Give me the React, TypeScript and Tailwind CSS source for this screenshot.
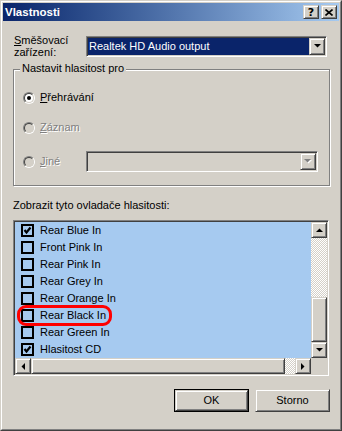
import React from "react";

const raised =
  "border border-t-[#D4D0C8] border-l-[#D4D0C8] border-r-[#404040] border-b-[#404040] shadow-[inset_1px_1px_0_#fff,inset_-1px_-1px_0_#808080] bg-[#D4D0C8]";
const sunken =
  "border border-t-[#808080] border-l-[#808080] border-r-white border-b-white shadow-[inset_1px_1px_0_#404040,inset_-1px_-1px_0_#D4D0C8] p-[1px]";
const dither =
  "bg-[conic-gradient(#fff_25%,#D4D0C8_0_50%,#fff_0_75%,#D4D0C8_0)] bg-[length:2px_2px]";

function Arrow({ dir, color = "#000" }: { dir: "up" | "down" | "left" | "right"; color?: string }) {
  const pts: Record<string, string> = {
    up: "0,4 7,4 3.5,0.5",
    down: "0,0 7,0 3.5,3.5",
    left: "4,0 4,7 0.5,3.5",
    right: "0,0 0,7 3.5,3.5",
  };
  const vertical = dir === "up" || dir === "down";
  return (
    <svg width={vertical ? 7 : 4} height={vertical ? 4 : 7} className="block">
      <polygon points={pts[dir]} fill={color} />
    </svg>
  );
}

function ScrollBtn({ dir, className = "" }: { dir: "up" | "down" | "left" | "right"; className?: string }) {
  return (
    <div className={`${raised} w-[16px] h-[16px] flex items-center justify-center shrink-0 ${className}`}>
      <Arrow dir={dir} />
    </div>
  );
}

function Radio({ checked, disabled }: { checked?: boolean; disabled?: boolean }) {
  return (
    <div className="w-[12px] h-[12px] rounded-full border border-t-[#808080] border-l-[#808080] border-r-white border-b-white shrink-0">
      <div
        className={`w-full h-full rounded-full border border-t-[#404040] border-l-[#404040] border-r-[#D4D0C8] border-b-[#D4D0C8] flex items-center justify-center ${
          disabled ? "bg-[#D4D0C8]" : "bg-white"
        }`}
      >
        {checked && <div className="w-[4px] h-[4px] rounded-full bg-black" />}
      </div>
    </div>
  );
}

function Check({ checked }: { checked: boolean }) {
  return (
    <div className="w-[13px] h-[13px] border-2 border-black shrink-0 flex items-center justify-center">
      {checked && (
        <svg width="9" height="9" className="block">
          <polyline points="1.5,4 3.5,6.5 7.5,1.5" fill="none" stroke="#000" strokeWidth="2.2" />
        </svg>
      )}
    </div>
  );
}

const items: [string, boolean][] = [
  ["Rear Blue In", true],
  ["Front Pink In", false],
  ["Rear Pink In", false],
  ["Rear Grey In", false],
  ["Rear Orange In", false],
  ["Rear Black In", false],
  ["Rear Green In", false],
  ["Hlasitost CD", true],
];

const disabledText = "text-[#808080] [text-shadow:1px_1px_0_#fff]";

export default function App() {
  return (
    <div className="w-[342px] h-[431px] border border-t-[#D4D0C8] border-l-[#D4D0C8] border-r-[#404040] border-b-[#404040] bg-[#D4D0C8] font-['Liberation_Sans',Arial,sans-serif] text-[11px] leading-[13px] text-black">
      <div className="w-full h-full border border-t-white border-l-white border-r-[#808080] border-b-[#808080] p-[1px] flex flex-col">
        {/* title bar */}
        <div className="h-[18px] flex items-center pl-[2px] pr-[2px] bg-gradient-to-r from-[#0A246A] to-[#A6CAF0] shrink-0">
          <span className="text-white font-bold text-[11.5px] flex-1">Vlastnosti</span>
          <div className={`${raised} w-[16px] h-[14px] flex items-center justify-center`}>
            <span className="font-bold text-[11px] leading-[11px] font-['DejaVu_Sans',sans-serif]">?</span>
          </div>
          <div className={`${raised} w-[16px] h-[14px] flex items-center justify-center ml-[2px]`}>
            <svg width="8" height="7" className="block">
              <path d="M0.5 0.5 L7.5 6.5 M7.5 0.5 L0.5 6.5" stroke="#000" strokeWidth="1.6" />
            </svg>
          </div>
        </div>

        {/* body */}
        <div className="flex flex-col pt-[12px] pl-[10px] pr-[9px]">
          <div className="flex items-center h-[26px]">
            <div className="w-[73px] pl-[1px] leading-[12px]">
              <div>
                <span className="underline">S</span>měšovací
              </div>
              <div>zařízení:</div>
            </div>
            <div className={`${sunken} w-[241px] h-[21px] flex bg-white`}>
              <div className="flex-1 bg-[#0A246A] text-white pl-[1px] flex items-center">Realtek HD Audio output</div>
              <div className={`${raised} w-[16px] h-[17px] flex items-center justify-center`}>
                <Arrow dir="down" />
              </div>
            </div>
          </div>

          {/* group box */}
          <div className="relative mt-[10px] h-[117px] border border-[#808080] shadow-[inset_1px_1px_0_#fff,1px_1px_0_#fff] pt-[21px] pl-[9px] pr-[11px] flex flex-col gap-[17px]">
            <span className="absolute -top-[8px] left-[6px] px-[2px] bg-[#D4D0C8]">Nastavit hlasitost pro</span>
            <div className="flex items-center gap-[5px] h-[13px]">
              <Radio checked />
              <span>
                <span className="underline">P</span>řehrávání
              </span>
            </div>
            <div className="flex items-center gap-[5px] h-[13px]">
              <Radio disabled />
              <span className={disabledText}>
                <span className="underline">Z</span>áznam
              </span>
            </div>
            <div className="flex items-center gap-[5px] h-[21px]">
              <Radio disabled />
              <span className={disabledText}>
                <span className="underline">J</span>iné
              </span>
              <div className={`${sunken} ml-auto w-[232px] h-[21px] flex bg-[#D4D0C8]`}>
                <div className="flex-1" />
                <div className={`${raised} w-[16px] h-[17px] flex items-center justify-center`}>
                  <svg width="8" height="5" className="block">
                    <polygon points="1,1 8,1 4.5,4.5" fill="#fff" />
                    <polygon points="0,0 7,0 3.5,3.5" fill="#808080" />
                  </svg>
                </div>
              </div>
            </div>
          </div>

          <div className="mt-[13px]">Zobrazit tyto ovladače hlasitosti:</div>

          {/* list box */}
          <div className={`${sunken} mt-[8px] w-[316px] h-[156px] bg-[#A6CAF0] flex flex-col`}>
            <div className="flex h-[136px]">
              <div className="relative flex-1 flex flex-col">
                {items.map(([name, on]) => (
                  <div key={name} className="h-[17px] flex items-center pl-[6px] gap-[6px]">
                    <Check checked={on} />
                    <span>{name}</span>
                  </div>
                ))}
                <div className="absolute left-[2px] top-[83px] w-[95px] h-[21px] border-[3px] border-[#FF0000] rounded-[9px]" />
              </div>
              <div className="w-[16px] flex flex-col">
                <ScrollBtn dir="up" />
                <div className={`h-[59px] ${dither}`} />
                <div className={`${raised} h-[45px]`} />
                <ScrollBtn dir="down" />
              </div>
            </div>
            <div className="flex h-[16px]">
              <ScrollBtn dir="left" />
              <div className={`${raised} w-[254px] h-[16px]`} />
              <div className={`flex-1 ${dither}`} />
              <ScrollBtn dir="right" />
              <div className="w-[16px] bg-[#D4D0C8]" />
            </div>
          </div>

          {/* buttons */}
          <div className="flex justify-end gap-[6px] mt-[13px]">
            <div className="w-[75px] h-[23px] border border-black">
              <div className={`${raised} w-full h-full flex items-center justify-center`}>OK</div>
            </div>
            <div className={`${raised} w-[75px] h-[23px] flex items-center justify-center`}>Storno</div>
          </div>
        </div>
      </div>
    </div>
  );
}
